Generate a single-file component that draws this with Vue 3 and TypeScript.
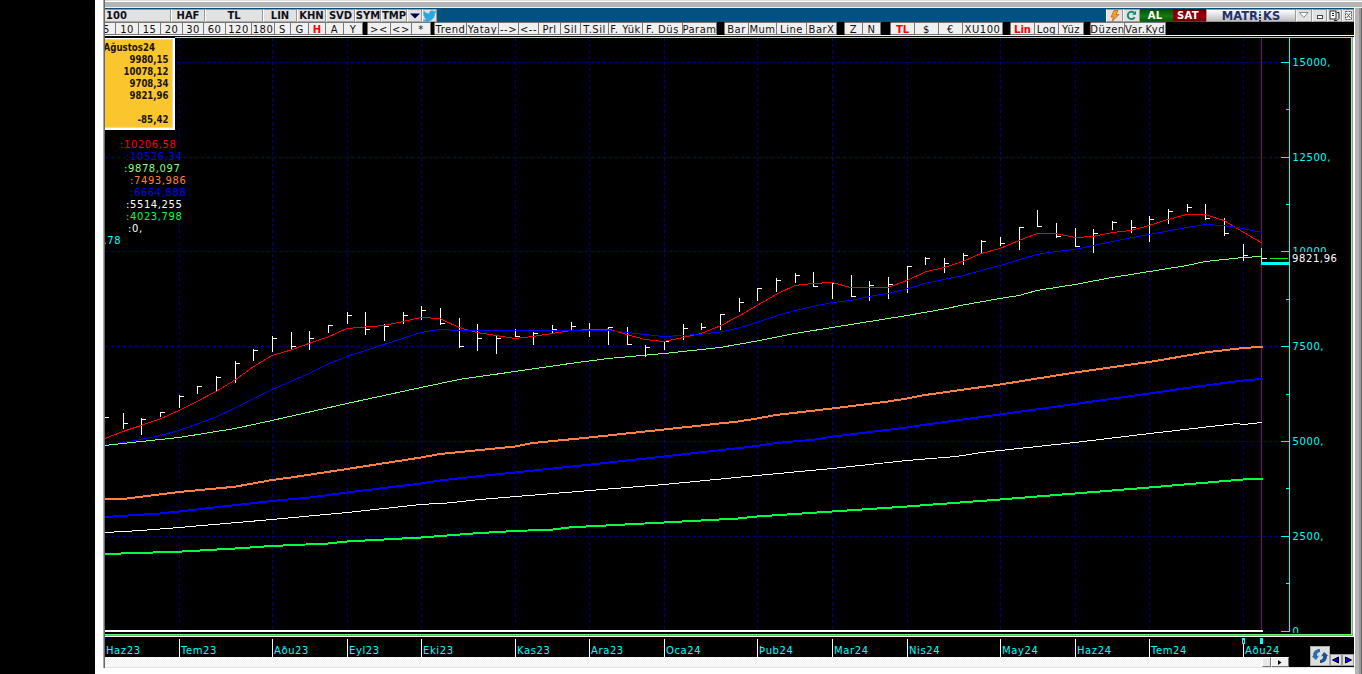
<script setup lang="ts">
interface Cell { t: string; w: number; hot?: boolean }

const headCells: Cell[] = [
  { t: '100', w: 66 }, { t: 'HAF', w: 34 }, { t: 'TL', w: 58 }, { t: 'LIN', w: 34 }, { t: 'KHN', w: 29 },
  { t: 'SVD', w: 29 }, { t: 'SYM', w: 26 }, { t: 'TMP', w: 26 },
]

const toolCells: Cell[] = [
  { t: '5', w: 11 }, { t: '10', w: 23 }, { t: '15', w: 22 }, { t: '20', w: 22 }, { t: '30', w: 21 }, { t: '60', w: 22 },
  { t: '120', w: 26 }, { t: '180', w: 23 }, { t: 'S', w: 16 }, { t: 'G', w: 18 }, { t: 'H', w: 17, hot: true },
  { t: 'A', w: 18 }, { t: 'Y', w: 19 }, { t: '', w: 5 }, { t: '><', w: 23 }, { t: '<>', w: 21 }, { t: '*', w: 19 },
  { t: '', w: 4 }, { t: 'Trend', w: 32 }, { t: 'Yatay', w: 32 }, { t: '-->', w: 20 }, { t: '<--', w: 20 },
  { t: 'Prl', w: 22 }, { t: 'Sil', w: 20 }, { t: 'T.Sil', w: 28 }, { t: 'F. Yük', w: 34 }, { t: 'F. Düş', w: 40 },
  { t: 'Param', w: 34 }, { t: '', w: 8 }, { t: 'Bar', w: 24 }, { t: 'Mum', w: 28 }, { t: 'Line', w: 30 },
  { t: 'BarX', w: 30 }, { t: '', w: 8 }, { t: 'Z', w: 18 }, { t: 'N', w: 18 }, { t: '', w: 10 },
  { t: 'TL', w: 24, hot: true }, { t: '$', w: 24 }, { t: '€', w: 24 }, { t: 'XU100', w: 40 }, { t: '', w: 8 },
  { t: 'Lin', w: 24, hot: true }, { t: 'Log', w: 24 }, { t: 'Yüz', w: 25 }, { t: '', w: 7 }, { t: 'Düzen', w: 34 },
  { t: 'Var.Kyd', w: 41 },
]

const months: { x: number; t: string; year?: boolean }[] = [
  { x: 179.5, t: 'Tem23' }, { x: 272.5, t: 'Aðu23', year: true }, { x: 347.5, t: 'Eyl23' }, { x: 421.5, t: 'Eki23' },
  { x: 515.5, t: 'Kas23' }, { x: 589.5, t: 'Ara23' }, { x: 664.5, t: 'Oca24', year: true }, { x: 757.5, t: 'Þub24' },
  { x: 832.5, t: 'Mar24', year: true }, { x: 907.5, t: 'Nis24' }, { x: 1000.5, t: 'May24', year: true },
  { x: 1075.5, t: 'Haz24' }, { x: 1149.5, t: 'Tem24' }, { x: 1243.5, t: 'Aðu24' },
]

const levels: { y: number; t: string }[] = [
  { y: 62.5, t: '15000,' }, { y: 157.5, t: '12500,' }, { y: 251.5, t: '10000,' },
  { y: 346.5, t: '7500,' }, { y: 441.5, t: '5000,' }, { y: 536.5, t: '2500,' }, { y: 631.5, t: '0,' },
]
const minorTicks: number[] = [109.5, 204.5, 299.5, 394.5, 488.5, 583.5]

// x, high, low, close
const bars: number[][] = [
  [123, 413, 429, 423], [141, 418, 435, 419], [160, 412, 417, 412], [179, 395, 408, 396], [197, 386, 394, 386],
  [216, 376, 391, 377], [235, 361, 383, 363], [253, 349, 361, 350], [272, 336, 352, 338], [291, 332, 349, 346],
  [309, 331, 350, 338], [328, 325, 333, 325], [347, 312, 324, 315], [365, 312, 335, 329], [384, 324, 341, 326],
  [403, 312, 324, 315], [421, 306, 320, 310], [440, 308, 325, 323], [459, 318, 348, 346], [477, 324, 351, 338],
  [496, 335, 354, 338], [515, 329, 337, 336], [533, 332, 345, 333], [552, 325, 333, 329], [571, 322, 330, 326],
  [589, 323, 337, -1], [608, 327, 345, 327], [627, 327, 345, 344], [645, 345, 357, 347], [664, 341, 350, 341],
  [683, 324, 340, 328], [701, 323, 330, 327], [720, 314, 330, 314], [739, 298, 312, 302], [757, 288, 301, 288],
  [776, 278, 292, 280], [795, 273, 283, 275], [813, 272, 287, 286], [832, 283, 299, 283], [851, 275, 297, 296],
  [869, 281, 301, 285], [888, 277, 299, 284], [907, 266, 293, 266], [925, 257, 265, 258], [944, 258, 273, 263],
  [963, 253, 265, 255], [981, 240, 253, 241], [1000, 237, 246, 243], [1019, 227, 250, 227], [1037, 210, 227, 226],
  [1056, 223, 238, 236], [1075, 228, 247, 246], [1093, 229, 253, 233], [1112, 221, 230, 222], [1131, 220, 233, 227],
  [1149, 216, 242, 219], [1168, 209, 224, 211], [1187, 204, 212, 207], [1205, 204, 220, 218], [1224, 218, 236, 233],
  [1243, 244, 261, 255],
]

const series: { c: string; w: number; p: string }[] = [
  { c: '#f00', w: 1, p: '105,438.5 123,431.5 141,425.5 160,419 179,410.5 197,401.5 216,391.5 235,380 253,367 272,355.5 291,350 309,343.5 328,337 347,328.5 384,325.5 403,321.5 421,317.5 440,318.5 459,327.5 477,332.5 496,335.5 515,338.5 533,336.5 568,331 589,329.5 608,329 627,334.5 645,339.5 664,341.5 683,337.5 701,333.5 720,326 739,316 757,305.5 776,294.5 795,285.5 813,283.5 832,282.5 851,287.5 888,287.5 907,280.5 925,272 944,267.5 963,261.5 981,253.5 1000,248.5 1019,240.5 1037,233.5 1056,233.5 1075,237.5 1093,236.5 1112,232.5 1131,230.5 1149,225.5 1168,219.5 1187,214.5 1205,214.5 1224,220.5 1243,232 1262,243' },
  { c: '#00f', w: 1, p: '105,445.5 123,442.5 141,439.5 160,435.5 179,430.5 197,424 216,417 235,408 253,399 272,389.5 309,373.5 328,364 347,356.5 384,344.5 421,332.5 440,329.5 459,330.5 608,330.5 627,332.5 645,334.5 664,336.5 683,335.5 701,334.2 720,332 739,328 757,322.5 776,316 795,310.5 813,306.5 832,302.5 851,300.5 869,296.5 888,293.5 907,289 925,283.5 963,275.5 1000,265.5 1037,254.5 1056,251.5 1075,249.5 1112,241.5 1149,234.5 1187,227.5 1205,224.5 1224,225.5 1243,228.5 1262,232.5' },
  { c: '#80ff80', w: 1, p: '105,445.5 141,441.5 179,437.5 235,428.5 272,420.5 347,403.5 421,387.5 459,379.5 515,371.5 570,363.5 608,358.5 664,353.5 720,347.5 757,341 795,333.5 832,327.5 907,315.5 944,309 963,305 1000,298.5 1019,295.5 1037,290.5 1075,284.5 1112,277.5 1187,265.5 1205,261.5 1243,257.5 1262,256.5' },
  { c: '#ff8040', w: 2, p: '105,499 123,499 179,492 235,486.7 272,480 291,477.5 347,469 421,457.5 440,454 480,450 515,446.5 533,443 589,437.5 664,429.5 738,421.5 757,418.5 776,415 832,408.5 888,401.5 907,398.5 925,395 950,391.5 1000,384.5 1075,372.5 1149,362 1205,352.5 1243,348 1263,346.8' },
  { c: '#00f', w: 2, p: '105,517 160,513.5 179,511.5 272,501 310,497.5 347,492.5 421,483.5 440,480.5 480,476 515,472.5 589,464.7 664,456.5 757,446 776,443 814,439.7 832,436.7 907,427.5 925,424.7 1000,414.5 1075,404 1149,393.5 1187,388 1243,380.5 1263,378.8' },
  { c: '#fff', w: 1, p: '105,532.5 141,530.5 179,527.5 272,519.5 347,512.5 421,504.5 450,502.8 480,499.5 515,496.6 664,484.5 757,475.5 832,468.5 907,460.5 956,456.5 981,452.6 1000,450.5 1075,442.5 1149,433.6 1237,423.5 1243,424.5 1262,422.5' },
  { c: '#00ff40', w: 2, p: '105,554 179,551.7 235,548.5 272,546 328,543.5 347,541.5 421,537.5 480,533 515,531 553,529.5 571,527.3 664,522.5 738,518.5 757,516.5 832,511.5 907,506.5 1000,499.5 1075,493.5 1149,487.5 1243,479.5 1263,478.8' },
]

const readout: { x: number; t: string; c: string }[] = [
  { x: 120, t: ':10206,58', c: '#f00' }, { x: 126, t: ':10526,34', c: '#00f' }, { x: 124, t: ':9878,097', c: '#80ff80' },
  { x: 130, t: ':7493,986', c: '#ff8040' }, { x: 130, t: ':6664,888', c: '#00f' }, { x: 126, t: ':5514,255', c: '#fff' },
  { x: 126, t: ':4023,798', c: '#00ff40' }, { x: 128, t: ':0,', c: '#fff' },
]

const quotes: { y: number; t: string; w: number }[] = [
  { y: 63, t: '9980,15', w: 39 }, { y: 75, t: '10078,12', w: 45 }, { y: 87, t: '9708,34', w: 39 },
  { y: 99, t: '9821,96', w: 39 }, { y: 123, t: '-85,42', w: 31 },
]
</script>

<template>
  <div class="screen">
    <div class="gutter"></div>
    <div class="window">
      <div class="top-edge"></div>
      <div class="body">
        <div class="main">
          <div class="titlebar">
            <div v-for="c in headCells" :key="c.t" class="head" :class="{ first: c.t === '100' }" :style="{ width: c.w + 'px' }">{{ c.t }}</div>
            <div class="head drop"><svg width="10" height="6"><path d="M0 0.500H10L5 5.500Z" fill="#000050" /></svg></div>
            <div class="head bird">
              <svg width="13" height="12" viewBox="0 0 24 22"><path d="M24 3.600a10 10 0 0 1-2.800.8A4.900 4.900 0 0 0 23.300 1.700a9.900 9.900 0 0 1-3.100 1.200 4.900 4.900 0 0 0-8.400 4.500A14 14 0 0 1 1.700 2.200a4.900 4.900 0 0 0 1.500 6.600 4.900 4.900 0 0 1-2.200-.6 4.900 4.900 0 0 0 3.900 4.900 5 5 0 0 1-2.200.1 4.900 4.900 0 0 0 4.600 3.400A9.900 9.900 0 0 1 0 18.600a14 14 0 0 0 21.500-12.400A10 10 0 0 0 24 3.600Z" fill="#2ca7e0" stroke="#2ca7e0" /></svg>
            </div>
            <div class="spacer"></div>
            <div class="ctl bolt"><svg width="12" height="12" viewBox="0 0 12 12"><path d="M5 0.500H9L7 4.500H10L3 11.500L4.500 7H2Z" fill="#f8a11a" stroke="#b05a10" stroke-width="0.700" /></svg></div>
            <div class="ctl sync"><svg width="11" height="11" viewBox="0 0 11 11"><path d="M8.700 7.300A3.700 3.700 0 1 1 8 2.700" fill="none" stroke="#109070" stroke-width="1.900" /><path d="M6 4.800H10V0.800Z" fill="#109070" /></svg></div>
            <div class="trade buy">AL</div>
            <div class="trade sell">SAT</div>
            <div class="brand"><span>MATR</span><svg width="5" height="11" viewBox="0 0 5 11"><path d="M1 0h2v2H1z" fill="#35a8d8" /><path d="M1 3h2v2H1zM1 6h2v2H1zM1 9h2v2H1z" fill="#25306a" /></svg><span>KS</span></div>
            <div class="ctl c1"><svg width="10" height="7"><path d="M0.500 0.500H9L4.750 5.500Z" fill="#fff" stroke="#888" /></svg></div>
            <div class="ctl c2"><svg width="6" height="9"><rect x="0.500" y="4.500" width="5" height="3" fill="#fff" stroke="#444" /></svg></div>
            <div class="ctl c2"><svg width="11" height="11"><rect x="1" y="1" width="6" height="8" fill="#fff" stroke="#222" /><path d="M8 2.500H10V8.500L8 10.500H5" fill="none" stroke="#222" /><path d="M3 3.500H5M3 5.500H5" stroke="#222" /></svg></div>
            <div class="ctl c3"><svg width="7" height="9"><rect x="0.500" y="0.500" width="6" height="8" fill="#fff" stroke="#555" stroke-dasharray="2 1" /><path d="M1.500 2L5.500 7M5.500 2L1.500 7" stroke="#555" /></svg></div>
          </div>
          <div class="tools">
            <div v-for="(c, i) in toolCells" :key="i" class="tool" :class="{ gap: !c.t, hot: c.hot, lead: i === 0 }" :style="{ width: c.w + 'px' }"><span>{{ c.t }}</span></div>
          </div>
          <div class="rule"></div>

          <svg class="chart" width="1249" height="620" viewBox="105 37 1249 620">
            <rect x="105" y="37" width="1249" height="620" fill="#000" />
            <g shape-rendering="crispEdges" fill="none">
              <g stroke-dasharray="3 3">
                <path v-for="l in levels" :key="l.y" :d="`M105 ${l.y}H1284`" stroke="#000080" />
                <path v-for="m in months" :key="m.x" :d="`M${m.x} 38V630`" :stroke="m.year ? '#00009a' : '#000080'" />
              </g>
              <path d="M1261.500 38V630" stroke="#800080" />
              <path d="M105 417.500H109" stroke="#fff" />
              <path v-for="b in bars" :key="b[0]" :d="`M${b[0] + 0.5} ${b[1]}V${b[2]}` + (b[3] > 0 ? `M${b[0]} ${b[3] + 0.5}H${b[0] + 5}` : '')" stroke="#fff" />
              <polyline v-for="(s, i) in series" :key="i" :points="s.p" :stroke="s.c" :stroke-width="s.w" />
              <path d="M1261.500 248V263" stroke="#80ff80" />
              <path d="M1261 258.500H1267" stroke="#fff" />
              <path d="M1270 258.500H1288" stroke="#00ff00" />
              <path d="M1261 263.500H1289" stroke="#0ff" stroke-width="3" />
              <path d="M1289.500 38V632" stroke="#0ff" />
              <path v-for="l in levels" :key="l.y" :d="`M1281 ${l.y}H1289`" stroke="#0ff" />
              <path v-for="y in minorTicks" :key="y" :d="`M1286 ${y}H1289`" stroke="#0ff" />
            </g>
            <g class="txt" fill="#0ff">
              <text v-for="l in levels" :key="l.y" x="1292.500" :y="l.y + 3.5">{{ l.t }}</text>
            </g>
            <rect x="1291" y="252" width="54" height="12" fill="#000" />
            <text class="txt" x="1292" y="262" fill="#fff">9821,96</text>

            <rect x="105" y="38" width="70" height="92" fill="#fff" />
            <rect x="105" y="39" width="68" height="89" fill="#d8d8d8" />
            <rect x="105" y="40" width="67" height="87" fill="#fac62d" />
            <g class="quote">
              <text x="103.500" y="51" textLength="51.500" lengthAdjust="spacingAndGlyphs">Ağustos24</text>
              <text v-for="q in quotes" :key="q.y" :x="168.5 - q.w" :y="q.y" :textLength="q.w" lengthAdjust="spacingAndGlyphs">{{ q.t }}</text>
            </g>
            <g class="txt">
              <text v-for="(r, i) in readout" :key="i" :x="r.x" :y="148 + i * 12" :fill="r.c">{{ r.t }}</text>
              <text x="103.500" y="244" fill="#0ff">,78</text>
            </g>

            <g shape-rendering="crispEdges">
              <rect x="105" y="630" width="1158" height="2" fill="#fff" />
              <rect x="105" y="633" width="1248" height="4" fill="#000" />
              <rect x="105" y="634" width="1247" height="1" fill="#60f060" />
              <rect x="105" y="635" width="1248" height="1" fill="#999" />
              <rect x="105" y="636" width="1249" height="1" fill="#fff" />
              <rect x="175" y="37" width="1177" height="1" fill="#80ff80" />
              <rect x="1351" y="37" width="1" height="598" fill="#80ff80" />
              <rect x="1352" y="37" width="1" height="599" fill="#999" />
              <rect x="1353" y="37" width="1" height="600" fill="#fff" />
              <rect v-for="m in months" :key="m.x" :x="m.x - 0.5" y="639" width="1" height="18" fill="#fff" />
              <rect x="1242" y="638" width="3" height="6" fill="#0ff" />
              <rect x="1243" y="640" width="1" height="3" fill="#b00" />
              <rect x="1260" y="638" width="3" height="6" fill="#0ff" />
            </g>
            <g class="txt" fill="#0ff">
              <text x="106" y="654">Haz23</text>
              <text v-for="m in months" :key="m.x" :x="m.x + 1.5" y="654">{{ m.t }}</text>
            </g>
          </svg>

          <div class="bottom">
            <div class="track"></div>
            <div class="thumb"></div>
            <div class="step"><svg width="4" height="5"><path d="M0 0L3.500 2.500L0 5Z" fill="#000" /></svg></div>
            <div class="nav">
              <div class="reload">
                <svg width="16" height="16" viewBox="0 0 16 16"><path d="M8 1C4 1 1 3.500 1 8L0 8.500L4 12L7 7.500L5 8C4.500 6 5.500 4.500 8 4Z" fill="#2e6cab" /><path d="M8 15C12 15 15 12.500 15 8L16 7.500L12 4L9 8.500L11 8C11.500 10 10.500 11.500 8 12Z" fill="#1d528f" /></svg>
              </div>
              <div class="arrow"><svg width="8" height="8"><path d="M6.500 1V7L0.500 4Z" fill="#00f" stroke="#000" /></svg></div>
              <div class="arrow"><svg width="8" height="8"><path d="M1.500 1V7L7.500 4Z" fill="#00f" stroke="#000" /></svg></div>
            </div>
          </div>
          <div class="foot"></div>
        </div>
        <div class="right-edge"></div>
      </div>
    </div>
  </div>
</template>

<style>
html, body { margin: 0; overflow: hidden; background: #fff; }
</style>

<style scoped>
.screen { display: flex; width: 1362px; height: 674px; overflow: hidden; background: #fff; font-family: "DejaVu Sans", Verdana, sans-serif; font-size: 11px; }
.screen * { box-sizing: border-box; }
.gutter { width: 95px; background: #000; flex: none; }
.window { margin-left: 8px; width: 1259px; display: flex; flex-direction: column; }
.top-edge { height: 8px; flex: none; border-top: 1px solid #dcdcdc; background: linear-gradient(#fff 1px, #b4b4b4 1px, #b4b4b4 6px, #f0f0f0 6px); }
.body { display: flex; flex: 1; }
.main { position: relative; width: 1251px; display: flex; flex-direction: column; }
.main::before { content: ""; position: absolute; left: 0; top: -8px; width: 2px; height: 668px; background: linear-gradient(90deg, #a8a8a8 50%, #696969 50%); }
.titlebar { margin-left: 2px; height: 14px; padding-top: 1px; background: #04517f; display: flex; flex: none; }
.head { height: 13px; background: #e2e2e2; border: 1px solid #999; border-left-color: #fff; border-bottom-color: #aaa; font-weight: bold; font-size: 10px; line-height: 12px; text-align: center; color: #101018; white-space: nowrap; display: flex; justify-content: center; flex: none; }
.head.first { justify-content: flex-start; border-left: 0; padding-left: 1px; }
.drop { width: 15px; align-items: center; }
.bird { width: 15px; align-items: center; }
.spacer { flex: 1; }
.ctl { height: 13px; background: #e2e2e2; border: 1px solid #999; border-left-color: #f4f4f4; display: flex; align-items: center; justify-content: center; flex: none; }
.bolt { width: 17px; }
.sync { width: 17px; }
.trade { width: 33px; height: 12px; color: #fff; font-weight: bold; font-size: 10px; letter-spacing: 0.300px; line-height: 13px; padding-right: 3px; text-align: center; flex: none; }
.buy { background: linear-gradient(#0a4a0a, #0f7d0f 60%, #0a5a0a); }
.sell { background: linear-gradient(#600, #900 60%, #700); }
.brand { width: 90px; height: 13px; border: 1px solid #999; background: linear-gradient(#fff, #bdbdbd); color: #25306a; font-weight: bold; font-size: 11.500px; line-height: 15px; padding-top: 2px; display: flex; justify-content: center; align-items: center; flex: none; }
.c1 { width: 16px; }
.c2 { width: 15px; }
.c3 { width: 12px; }
.tools { margin-left: 2px; height: 13px; background: #000; display: flex; flex: none; }
.tool { height: 13px; border: 1px solid #777; border-left: 0; background: #f0f0f0; color: #101010; font-size: 10px; letter-spacing: 0.500px; line-height: 13px; overflow: hidden; white-space: nowrap; display: flex; justify-content: center; flex: none; }
.tool.lead { justify-content: flex-start; }
.tool.lead span { margin-left: -2px; }
.tool.gap { background: #000; border-top-color: #000; border-bottom-color: #000; }
.tool.hot { color: #f00; font-weight: bold; font-size: 10px; letter-spacing: 0; }
.rule { margin-left: 2px; height: 2px; border-top: 1px solid #fff; background: #000; flex: none; }
.chart { margin-left: 2px; display: block; flex: none; }
.txt { font-family: "DejaVu Sans", Verdana, sans-serif; font-size: 10px; letter-spacing: 0.600px; }
.quote { font-family: "DejaVu Sans Condensed", "DejaVu Sans", sans-serif; font-weight: bold; font-size: 10.500px; fill: #1a1400; }
.bottom { margin-left: 2px; height: 10px; background: #000; display: flex; flex: none; }
.track { width: 1157px; background: repeating-conic-gradient(#fff 0 25%, #efefef 0 50%) 0 0 / 2px 2px; }
.thumb { width: 9px; background: #e8e8e8; border: 1px solid #fff; border-right-color: #777; border-bottom-color: #777; }
.step { width: 18px; background: #f0f0f0; border: 1px solid #fff; border-right-color: #777; border-bottom-color: #777; display: flex; align-items: center; justify-content: center; }
.nav { flex: 1; display: flex; justify-content: flex-end; align-items: flex-end; height: 20px; margin-top: -11px; position: relative; }
.reload { width: 20px; height: 20px; background: #dedede; border: 1px solid #aaa; display: flex; align-items: center; justify-content: center; }
.arrow { width: 12px; height: 12px; background: #dedede; border: 1px solid #999; display: flex; align-items: center; justify-content: center; }
.foot { height: 1px; background: #e4e4e4; flex: none; }
.right-edge { width: 8px; background: linear-gradient(90deg, #fff 1px, #b4b4b4 1px, #b4b4b4 5px, #969696 5px, #969696 7px, #666 7px); }
</style>
